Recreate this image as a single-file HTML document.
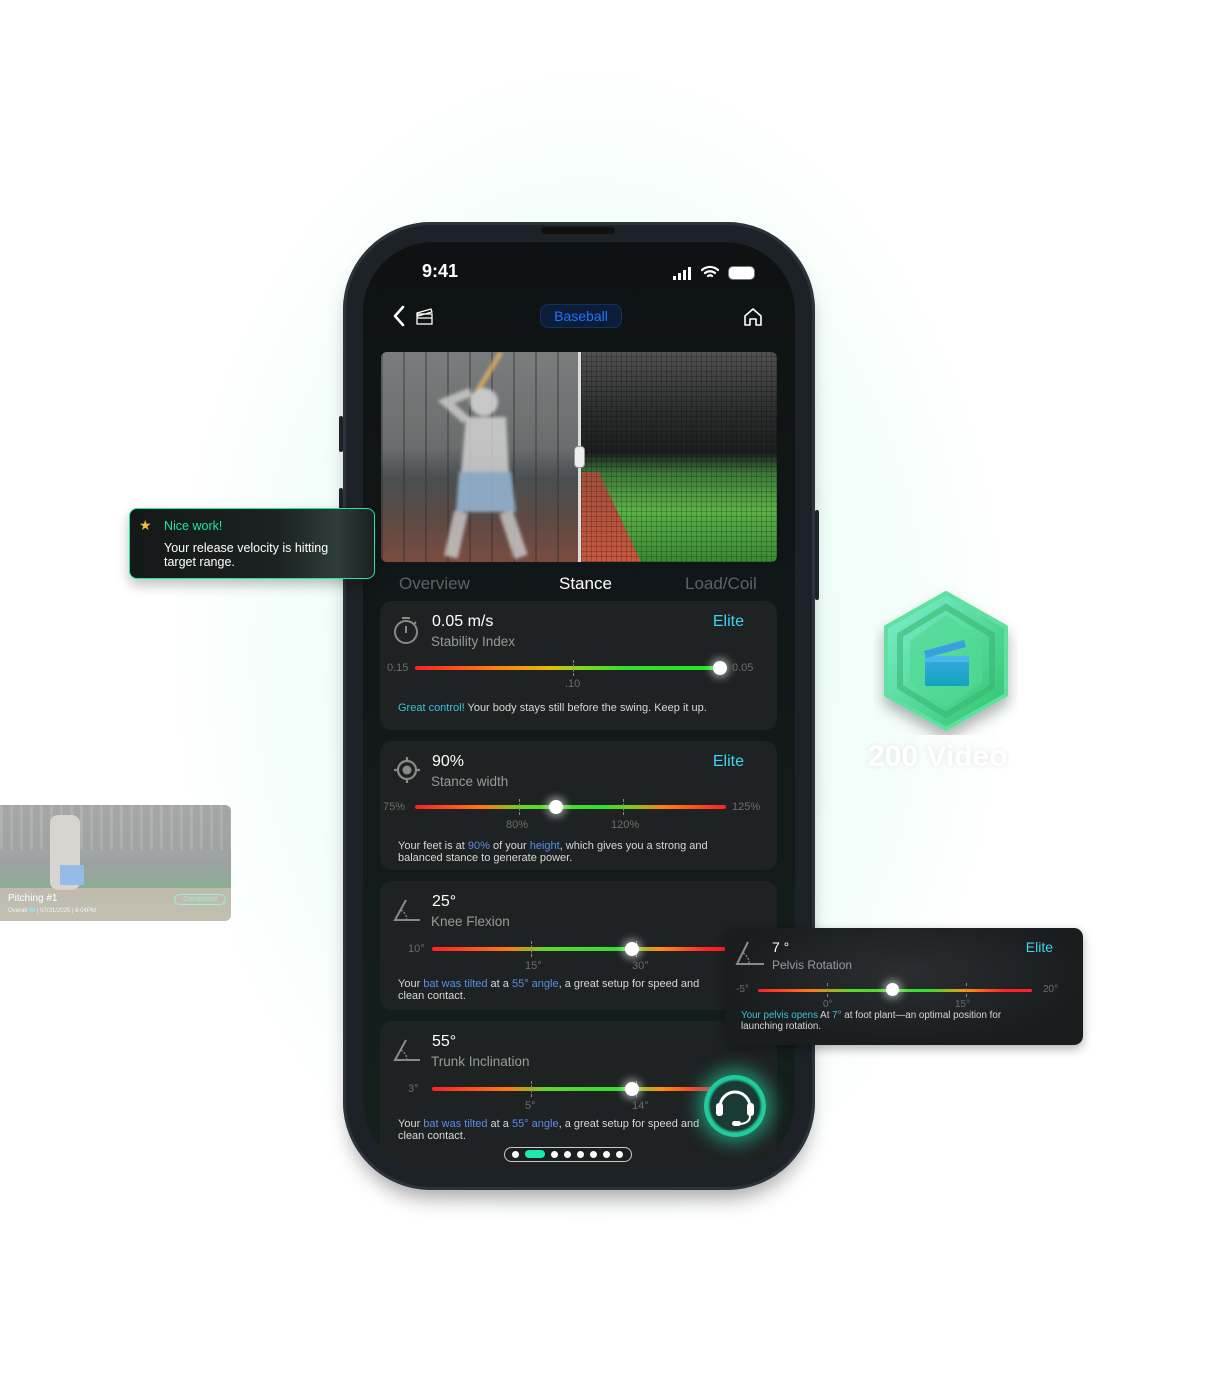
<!DOCTYPE html>
<html><head><meta charset="utf-8">
<style>
*{margin:0;padding:0;box-sizing:border-box}
body{width:1232px;height:1395px;overflow:hidden;position:relative;font-family:"Liberation Sans",sans-serif;
background:radial-gradient(ellipse 430px 600px at 590px 650px,#d6faf0 0%,#eafdf7 45%,#ffffff 100%);}
.a{position:absolute}
.phone{left:343px;top:222px;width:472px;height:968px;border-radius:88px;background:#1d2228;box-shadow:0 14px 20px -6px rgba(0,0,0,.35), inset 0 0 0 3px #2c333b}
.screen{left:363px;top:242px;width:432px;height:928px;border-radius:70px;background:linear-gradient(180deg,#0e1213 0%,#111718 40%,#14201d 100%);overflow:hidden}
.card{position:absolute;left:17px;width:397px;height:129px;border-radius:12px;background:#1e2222}
.val{position:absolute;left:52px;top:12px;color:#fff;font-size:16px}
.sub{position:absolute;left:51px;top:33px;color:#9a9a9a;font-size:13.5px}
.elite{position:absolute;right:33px;top:12px;color:#3fd4ee;font-size:16px}
.track{position:absolute;height:4px;border-radius:2px}
.knob{position:absolute;width:14px;height:14px;border-radius:50%;background:#fff;box-shadow:0 0 8px 3px rgba(255,255,255,.5)}
.tick{position:absolute;width:0;height:16px;border-left:1px dashed #888}
.lbl{position:absolute;color:#6d6d6d;font-size:11px}
.txt{position:absolute;left:18px;color:#d8d8d8;font-size:11px;line-height:12px}
.b{color:#5a8ee8}.c{color:#3fc1d8}
</style></head><body>

<div class="a" style="left:0;top:805px;width:231px;height:116px;border-radius:0 6px 6px 0;overflow:hidden;opacity:.55;background:linear-gradient(180deg,#6a6f70 0%,#4e5556 50%,#2f6a3e 70%,#3e7f46 100%)">
 <div class="a" style="left:0;top:0;width:231px;height:45px;background:repeating-linear-gradient(90deg,#777 0 3px,#555 3px 10px);opacity:.6"></div>
 <div class="a" style="left:50px;top:10px;width:30px;height:75px;background:#b9b3ad;border-radius:8px"></div>
 <div class="a" style="left:60px;top:60px;width:24px;height:20px;background:#3d86d2"></div>
 <div class="a" style="left:0;top:83px;width:231px;height:33px;background:rgba(200,150,140,.6)"></div>
 <div class="a" style="left:8px;top:88px;color:#fff;font-size:10px">Pitching #1</div>
 <div class="a" style="left:174px;top:89px;width:52px;height:11px;border:1px solid #4fe0c0;border-radius:6px;color:#4fe0c0;font-size:7px;text-align:center;line-height:9px">Completed</div>
 <div class="a" style="left:8px;top:103px;color:#eee;font-size:6px">Overall <b style="color:#3fd4ee">96</b> | 07/31/2025 | 6:04PM</div>
</div>

<svg class="a" style="left:872px;top:585px" width="150" height="150" viewBox="0 0 150 150">
 <defs><linearGradient id="hg" x1="0" y1="0" x2="1" y2="1"><stop offset="0" stop-color="#7ff0d0"/><stop offset="1" stop-color="#2ec46a"/></linearGradient>
 <linearGradient id="cl" x1="0" y1="0" x2="0" y2="1"><stop offset="0" stop-color="#3aa8e8"/><stop offset="1" stop-color="#10a6b8"/></linearGradient>
 <filter id="sh"><feDropShadow dx="0" dy="8" stdDeviation="7" flood-opacity=".3"/></filter></defs>
 <polygon points="74,8 134,42 134,110 74,144 14,110 14,42" fill="url(#hg)" filter="url(#sh)" stroke="#5fe0a0" stroke-width="4" stroke-linejoin="round"/>
 <polygon points="74,22 120,50 120,102 74,130 28,102 28,50" fill="none" stroke="#3ab874" stroke-width="6" opacity=".6"/>
 <polygon points="74,30 110,56 110,98 74,122 38,98 38,56" fill="#52d896" opacity=".7"/>
 <rect x="53" y="71" width="44" height="30" rx="2" fill="url(#cl)"/>
 <rect x="53" y="71" width="44" height="6" fill="#4ab8ea"/>
 <path d="M52 66 L92 55 L94 62 L54 73 Z" fill="#3a9ee0"/>
</svg>
<div class="a" style="left:868px;top:740px;color:#fff;font-size:30px;font-weight:bold;text-shadow:0 0 6px rgba(0,0,0,.1)">200 Video</div>

<div class="a phone"></div>
<div class="a" style="left:541px;top:227px;width:74px;height:7px;border-radius:4px;background:#111"></div>
<div class="a" style="left:339px;top:416px;width:4px;height:36px;background:#1d2228;border-radius:2px"></div>
<div class="a" style="left:339px;top:488px;width:4px;height:60px;background:#1d2228;border-radius:2px"></div>
<div class="a" style="left:815px;top:510px;width:4px;height:90px;background:#1d2228;border-radius:2px"></div>

<div class="a screen">
 <div class="a" style="left:59px;top:19px;color:#fff;font-size:18px;font-weight:bold">9:41</div>
 <div class="a" style="left:310px;top:34px;width:3px;height:4px;background:#fff"></div>
 <div class="a" style="left:315px;top:31px;width:3px;height:7px;background:#fff"></div>
 <div class="a" style="left:320px;top:28px;width:3px;height:10px;background:#fff"></div>
 <div class="a" style="left:325px;top:25px;width:3px;height:13px;background:#fff"></div>
 <svg class="a" style="left:338px;top:23px" width="18" height="14" viewBox="0 0 18 14"><path d="M1 5a12 12 0 0 1 16 0M4 8a8 8 0 0 1 10 0M7 11a3.5 3.5 0 0 1 4 0" stroke="#fff" stroke-width="2.2" fill="none" stroke-linecap="round"/></svg>
 <div class="a" style="left:366px;top:25px;width:25px;height:12px;border-radius:4px;background:#fff;box-shadow:0 0 0 1px #777"></div>
 <svg class="a" style="left:28px;top:62px" width="50" height="24" viewBox="0 0 50 24"><path d="M12 3 L4 12 L12 21" stroke="#fff" stroke-width="2.6" fill="none" stroke-linecap="round" stroke-linejoin="round"/><rect x="26" y="10" width="15" height="10" stroke="#fff" stroke-width="1.3" fill="none"/><path d="M26 9 L40 5 L41 8 L27 12Z" stroke="#fff" stroke-width="1.2" fill="none"/><path d="M26 14h15" stroke="#fff" stroke-width="1.2"/></svg>
 <div class="a" style="left:177px;top:62px;width:82px;height:24px;border-radius:8px;background:#0b1d38;border:1px solid #15315a;color:#1f74ff;font-size:14px;text-align:center;line-height:22px">Baseball</div>
 <svg class="a" style="left:379px;top:64px" width="22" height="22" viewBox="0 0 22 22"><path d="M3 10 L11 3 L19 10 V19 H14 V13 H8 V19 H3Z" stroke="#fff" stroke-width="1.6" fill="none" stroke-linejoin="round"/></svg>
 <div class="a" style="left:18px;top:110px;width:396px;height:210px;border-radius:6px;overflow:hidden;background:#444">
  <div class="a" style="left:0;top:0;width:200px;height:210px;background:linear-gradient(180deg,#7a7c7d 0%,#6b6e6e 45%,#4a4f50 60%,#5d4a44 80%,#7b4c40 100%)"></div>
  <div class="a" style="left:0;top:0;width:200px;height:210px;background:repeating-linear-gradient(90deg,rgba(40,40,40,.35) 0 2px,transparent 2px 22px)"></div>
  <svg class="a" style="left:40px;top:0;opacity:.8;filter:blur(1.5px)" width="140" height="210" viewBox="0 0 140 210"><path d="M80 0 L50 50" stroke="#e8b060" stroke-width="5"/><circle cx="63" cy="50" r="14" fill="#ddd"/><path d="M45 65 L85 65 L88 120 L40 120Z" fill="#d8d8d8"/><path d="M38 120 L90 120 L95 160 L35 160Z" fill="#9cc0e0"/><path d="M40 160 L30 205 M85 160 L100 205" stroke="#ccc" stroke-width="14"/><path d="M45 68 L25 50 L50 40" stroke="#cfcfcf" stroke-width="9" fill="none"/></svg>
  <div class="a" style="left:200px;top:0;width:196px;height:210px;background:linear-gradient(180deg,#505050 0%,#2a2c2c 30%,#1d1f1e 48%,#3d7a3a 58%,#5bb046 75%,#3a8a34 100%)"></div>
  <div class="a" style="left:200px;top:120px;width:60px;height:90px;background:linear-gradient(180deg,#a2503a,#c6583e);clip-path:polygon(0 0,30% 0,100% 100%,0 100%)"></div>
  <div class="a" style="left:200px;top:0;width:196px;height:210px;background:repeating-linear-gradient(0deg,rgba(0,0,0,.2) 0 1px,transparent 1px 5px),repeating-linear-gradient(90deg,rgba(0,0,0,.2) 0 1px,transparent 1px 5px)"></div>
  <div class="a" style="left:197px;top:0;width:3px;height:210px;background:#ddd"></div>
  <div class="a" style="left:193px;top:94px;width:11px;height:22px;border-radius:4px;background:#eee;border:1px solid #999"></div>
 </div>
 <div class="a" style="left:36px;top:332px;color:#5d6262;font-size:17px">Overview</div>
 <div class="a" style="left:196px;top:332px;color:#fff;font-size:17px">Stance</div>
 <div class="a" style="left:322px;top:332px;color:#5d6262;font-size:17px">Load/Coil</div>

 <div class="card" style="top:359px">
  <svg class="a" style="left:12px;top:14px" width="30" height="30" viewBox="0 0 30 30"><circle cx="14" cy="17" r="11" stroke="#8a8a8a" stroke-width="2" fill="none"/><path d="M14 11v7M10 3h8M24 7l-2 2" stroke="#8a8a8a" stroke-width="2"/></svg>
  <div class="val">0.05 m/s</div><div class="sub">Stability Index</div><div class="elite">Elite</div>
  <div class="lbl" style="left:7px;top:61px">0.15</div>
  <div class="track" style="left:35px;top:65px;width:305px;background:linear-gradient(90deg,#ff1f2a 0%,#ff7a10 25%,#e0c000 45%,#80d820 55%,#30e030 70%,#22e622 100%)"></div>
  <div class="tick" style="left:193px;top:59px"></div>
  <div class="knob" style="left:333px;top:60px"></div>
  <div class="lbl" style="left:352px;top:61px">0.05</div>
  <div class="lbl" style="left:185px;top:77px">.10</div>
  <div class="txt" style="top:101px"><span class="c">Great control!</span> Your body stays still before the swing. Keep it up.</div>
 </div>
 <div class="card" style="top:499px">
  <svg class="a" style="left:13px;top:15px" width="28" height="28" viewBox="0 0 28 28"><circle cx="14" cy="14" r="9" stroke="#8a8a8a" stroke-width="2.2" fill="none"/><circle cx="14" cy="14" r="4.5" fill="#8a8a8a"/><path d="M14 1v4M14 23v4M1 14h4M23 14h4" stroke="#8a8a8a" stroke-width="2.2"/></svg>
  <div class="val">90%</div><div class="sub">Stance width</div><div class="elite">Elite</div>
  <div class="lbl" style="left:3px;top:60px">75%</div>
  <div class="track" style="left:35px;top:64px;width:311px;background:linear-gradient(90deg,#ff1f2a 0%,#ff7a10 22%,#60d828 35%,#30e030 60%,#70d020 68%,#ff8010 80%,#ff1f2a 100%)"></div>
  <div class="tick" style="left:139px;top:58px"></div><div class="tick" style="left:243px;top:58px"></div>
  <div class="knob" style="left:169px;top:59px"></div>
  <div class="lbl" style="left:352px;top:60px">125%</div>
  <div class="lbl" style="left:126px;top:78px">80%</div><div class="lbl" style="left:231px;top:78px">120%</div>
  <div class="txt" style="top:99px">Your feet is at <span class="b">90%</span> of your <span class="b">height</span>, which gives you a strong and<br>balanced stance to generate power.</div>
 </div>
 <div class="card" style="top:639px">
  <svg class="a" style="left:12px;top:16px" width="30" height="26" viewBox="0 0 30 26"><path d="M14 3 L3 23 H28" stroke="#8a8a8a" stroke-width="2" fill="none"/><path d="M9 13 A12 12 0 0 1 15 23" stroke="#8a8a8a" stroke-width="1.3" stroke-dasharray="2 1.5" fill="none"/></svg>
  <div class="val">25°</div><div class="sub">Knee Flexion</div>
  <div class="lbl" style="left:28px;top:62px">10°</div>
  <div class="track" style="left:52px;top:66px;width:345px;background:linear-gradient(90deg,#ff1f2a 0%,#ff7a10 22%,#60d828 33%,#30e030 55%,#ff9010 66%,#ff1f2a 80%)"></div>
  <div class="tick" style="left:151px;top:60px"></div><div class="tick" style="left:256px;top:60px"></div>
  <div class="knob" style="left:245px;top:61px"></div>
  <div class="lbl" style="left:145px;top:79px">15°</div><div class="lbl" style="left:252px;top:79px">30°</div>
  <div class="txt" style="top:97px">Your <span class="b">bat was tilted</span> at a <span class="b">55° angle</span>, a great setup for speed and<br>clean contact.</div>
 </div>
 <div class="card" style="top:779px;height:150px">
  <svg class="a" style="left:12px;top:16px" width="30" height="26" viewBox="0 0 30 26"><path d="M14 3 L3 23 H28" stroke="#8a8a8a" stroke-width="2" fill="none"/><path d="M9 13 A12 12 0 0 1 15 23" stroke="#8a8a8a" stroke-width="1.3" stroke-dasharray="2 1.5" fill="none"/></svg>
  <div class="val">55°</div><div class="sub">Trunk Inclination</div>
  <div class="lbl" style="left:28px;top:62px">3°</div>
  <div class="track" style="left:52px;top:66px;width:293px;background:linear-gradient(90deg,#ff1f2a 0%,#ff7a10 26%,#60d828 39%,#30e030 65%,#ff9010 78%,#ff1f2a 94%)"></div>
  <div class="tick" style="left:151px;top:60px"></div><div class="tick" style="left:256px;top:60px"></div>
  <div class="knob" style="left:245px;top:61px"></div>
  <div class="lbl" style="left:145px;top:79px">5°</div><div class="lbl" style="left:252px;top:79px">14°</div>
  <div class="txt" style="top:97px">Your <span class="b">bat was tilted</span> at a <span class="b">55° angle</span>, a great setup for speed and<br>clean contact.</div>
 </div>
 <div class="a" style="left:141px;top:905px;width:128px;height:15px;border-radius:8px;border:1.5px solid #ccc;background:#1a1f1f"></div>
 <div class="a" style="left:149px;top:909px;width:7px;height:7px;border-radius:50%;background:#fff"></div>
 <div class="a" style="left:162px;top:908px;width:20px;height:8px;border-radius:4px;background:#1de8b0"></div>
 <div class="a" style="left:188px;top:909px;width:7px;height:7px;border-radius:50%;background:#fff"></div>
 <div class="a" style="left:201px;top:909px;width:7px;height:7px;border-radius:50%;background:#fff"></div>
 <div class="a" style="left:214px;top:909px;width:7px;height:7px;border-radius:50%;background:#fff"></div>
 <div class="a" style="left:227px;top:909px;width:7px;height:7px;border-radius:50%;background:#fff"></div>
 <div class="a" style="left:240px;top:909px;width:7px;height:7px;border-radius:50%;background:#fff"></div>
 <div class="a" style="left:253px;top:909px;width:7px;height:7px;border-radius:50%;background:#fff"></div>
</div>

<div class="a" style="left:704px;top:1075px;width:62px;height:62px;border-radius:50%;background:radial-gradient(circle,#1a3a36 55%,#20c8a0 62%,#38e078 100%);box-shadow:0 0 18px 6px rgba(40,230,180,.55)"></div>
<svg class="a" style="left:710px;top:1081px" width="50" height="50" viewBox="0 0 50 50"><path d="M10 26 A15 15 0 0 1 40 26" stroke="#fff" stroke-width="3" fill="none"/><rect x="6" y="22" width="7" height="13" rx="3" fill="#fff"/><rect x="37" y="22" width="7" height="13" rx="3" fill="#fff"/><path d="M40 35 Q40 42 30 43" stroke="#fff" stroke-width="2" fill="none"/><rect x="22" y="40" width="9" height="5" rx="2.5" fill="#fff"/></svg>

<div class="a" style="left:129px;top:508px;width:246px;height:71px;border-radius:8px;border:1.5px solid #1de8a0;background:linear-gradient(90deg,#141818 0%,#1b2221 60%,#2e3e3a 85%,#1a2020 100%);box-shadow:0 6px 12px rgba(0,0,0,.25)"></div>
<div class="a" style="left:139px;top:517px;color:#f5c030;font-size:14px">★</div>
<div class="a" style="left:164px;top:519px;color:#1de8a0;font-size:12.5px">Nice work!</div>
<div class="a" style="left:164px;top:541px;color:#fff;font-size:12.5px;line-height:14px">Your release velocity is hitting<br>target range.</div>

<div class="a" style="left:725px;top:928px;width:358px;height:117px;border-radius:9px;background:radial-gradient(ellipse at 50% 40%,#2a2e2f,#1a1d1e 70%);box-shadow:0 4px 10px rgba(0,0,0,.3)">
 <svg class="a" style="left:9px;top:11px" width="32" height="28" viewBox="0 0 32 28"><path d="M14 3 L3 25 H30" stroke="#8a8a8a" stroke-width="2" fill="none"/><path d="M9 14 A12 12 0 0 1 15 25" stroke="#8a8a8a" stroke-width="1.3" stroke-dasharray="2 1.5" fill="none"/></svg>
 <div class="a" style="left:47px;top:11px;color:#fff;font-size:14px">7 °</div>
 <div class="a" style="left:47px;top:30px;color:#9a9a9a;font-size:12px">Pelvis Rotation</div>
 <div class="a" style="right:30px;top:11px;color:#3fd4ee;font-size:14px">Elite</div>
 <div class="lbl" style="left:11px;top:56px;font-size:10px">-5°</div>
 <div class="track" style="left:33px;top:61px;width:274px;height:3px;background:linear-gradient(90deg,#ff1f2a 0%,#ff7a10 20%,#60d828 33%,#30e030 62%,#ff9010 76%,#ff1f2a 90%)"></div>
 <div class="tick" style="left:102px;top:55px;height:14px"></div><div class="tick" style="left:241px;top:55px;height:14px"></div>
 <div class="knob" style="left:161px;top:55px;width:13px;height:13px"></div>
 <div class="lbl" style="left:318px;top:56px;font-size:10px">20°</div>
 <div class="lbl" style="left:98px;top:71px;font-size:10px">0°</div><div class="lbl" style="left:230px;top:71px;font-size:10px">15°</div>
 <div class="a" style="left:16px;top:82px;color:#d8d8d8;font-size:9.8px;line-height:11px"><span class="c">Your pelvis opens</span> At <span class="c">7°</span> at foot plant—an optimal position for<br>launching rotation.</div>
</div>

</body></html>
